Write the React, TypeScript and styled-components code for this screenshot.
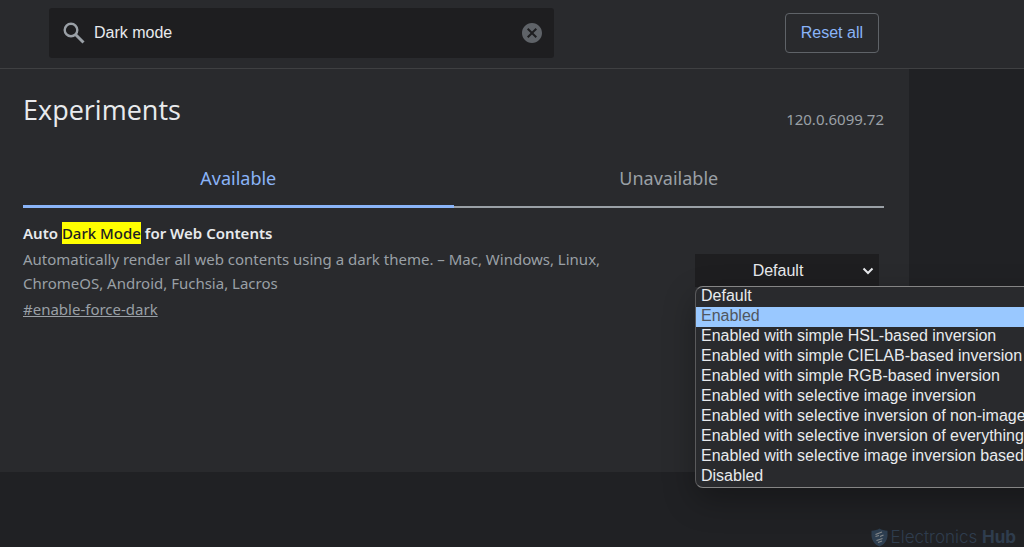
import React, { useState } from "react";
import styled, { createGlobalStyle } from "styled-components";
import { MdCancel } from "react-icons/md";

const GlobalStyle = createGlobalStyle`
  *, *::before, *::after { box-sizing: border-box; }
  html { background: #202124; }
  body {
    margin: 0;
    color: #e8eaed;
    font-family: "Noto Sans", "Open Sans", sans-serif;
    font-size: 15px;
  }
  button, input, select { font-family: "Liberation Sans", Arial, sans-serif; font-size: 16px; }
`;

const Page = styled.div`
  position: relative;
  min-height: 100vh;
  overflow: hidden;
`;

const Header = styled.header`
  background: #292a2d;
  border-bottom: 1px solid #3f4042;
`;

const HeaderContent = styled.div`
  display: flex;
  align-items: center;
  justify-content: space-between;
  gap: 24px;
  max-width: 909px;
  padding: 8px 30px 10px 49px;
`;

const SearchBox = styled.label`
  display: flex;
  align-items: center;
  flex: 0 1 505px;
  height: 50px;
  padding: 0 10px 0 14px;
  border-radius: 3px;
  background: #1e1e20;
`;

const SearchIcon = styled.svg`
  flex: none;
  width: 22px;
  height: 22px;
`;

const SearchInput = styled.input`
  flex: 1;
  min-width: 0;
  margin-left: 9px;
  padding: 0;
  border: 0;
  outline: 0;
  background: transparent;
  color: #e8eaed;
`;

const ClearButton = styled.button`
  display: flex;
  padding: 0;
  border: 0;
  background: transparent;
  color: #5f6368;
  font-size: 24px;
  cursor: pointer;
`;

const ResetButton = styled.button`
  flex: none;
  height: 40px;
  padding: 0 15px;
  border: 1px solid #5f6368;
  border-radius: 4px;
  background: transparent;
  color: #8ab4f8;
  cursor: pointer;
`;

const Panel = styled.main`
  max-width: 909px;
  padding: 21px 25px 151px 23px;
  background: #292a2d;
`;

const TitleRow = styled.div`
  display: flex;
  align-items: flex-end;
  justify-content: space-between;
`;

const Title = styled.h1`
  margin: 0;
  font-family: "Open Sans", "Noto Sans", sans-serif;
  font-size: 27px;
  font-weight: 400;
  line-height: 40px;
`;

const Version = styled.span`
  color: #9aa0a6;
  line-height: 22px;
`;

const TabList = styled.div`
  display: flex;
  margin-top: 19px;
`;

const Tab = styled.button<{ $selected: boolean }>`
  flex: 1;
  height: 59px;
  padding: ${(p) => (p.$selected ? "1px 0 0" : "0")};
  border: 0;
  border-bottom: ${(p) => (p.$selected ? "3px solid #8ab4f8" : "2px solid #9aa0a6")};
  background: transparent;
  color: ${(p) => (p.$selected ? "#8ab4f8" : "#9aa0a6")};
  font-family: "Noto Sans", "Open Sans", sans-serif;
  font-size: 18px;
  cursor: pointer;
`;

const Experiment = styled.section`
  display: flex;
  align-items: flex-start;
  justify-content: space-between;
  padding: 13px 5px 0 0;
`;

const Details = styled.div`
  flex: 0 1 600px;
`;

const Name = styled.h2`
  margin: 0;
  font-size: 15px;
  font-weight: 600;
  line-height: 24px;
`;

const Match = styled.mark`
  padding: 1px 0;
  background: #ffff00;
  color: #202124;
  font-weight: 500;
`;

const Description = styled.p`
  margin: 2px 0;
  color: #9aa0a6;
  line-height: 24px;
`;

const Permalink = styled.a`
  color: #9aa0a6;
  line-height: 24px;
`;

const SelectArea = styled.div`
  position: relative;
  flex: 0 0 184px;
  margin-top: 33px;
`;

const StateSelect = styled.select`
  display: block;
  width: 100%;
  height: 33px;
  padding: 0 18px 0 0;
  border: 0;
  border-radius: 0;
  outline: 0;
  appearance: none;
  background: #1e1e20;
  color: #e8eaed;
  text-align: center;
  text-align-last: center;
`;

const Chevron = styled.svg`
  position: absolute;
  top: 13px;
  right: 5px;
  width: 12px;
  height: 8px;
  pointer-events: none;
`;

const Menu = styled.ul`
  position: absolute;
  z-index: 1;
  top: calc(100% - 1px);
  left: 0;
  margin: 0;
  padding: 0;
  overflow: hidden;
  border: 1px solid #858585;
  border-left-color: #5a5a5c;
  border-radius: 8px;
  background: #292a2d;
  box-shadow: 0 12px 32px rgba(0, 0, 0, 0.3);
  list-style: none;
  font-family: "Liberation Sans", Arial, sans-serif;
  font-size: 16px;
  line-height: 18px;
  white-space: nowrap;
`;

const MenuItem = styled.li<{ $active: boolean }>`
  padding: 0 5px 2px;
  background: ${(p) => (p.$active ? "#99c8ff" : "transparent")};
  color: ${(p) => (p.$active ? "#50565e" : "#e8eaed")};
`;

const Watermark = styled.div`
  position: absolute;
  right: 8px;
  bottom: 0;
  display: flex;
  align-items: center;
  gap: 3px;
  color: #2f3d4e;
  font-family: Inter, sans-serif;
  font-size: 17px;
  font-weight: 300;
  line-height: 20px;

  b { font-weight: 700; }
`;

const ShieldLogo = () => (
  <svg width="17" height="19" viewBox="0 0 17 19" aria-hidden="true">
    <path d="M8.5 0.5 C6.5 2 3.5 2.5 0.5 2.8 L0.5 8 C1 13.5 4.5 17 8.5 18.5 C12.5 17 16 13.5 16.5 8 L16.5 2.8 C13.5 2.5 10.5 2 8.5 0.5Z" fill="#2d3e50" />
    <path d="M4.5 6.5 L11 4 M4.5 8.5 L8 7.5 M9 8.5 L12.5 7 M5.5 12.5 L11.5 10.5 M7 14.5 L11 13" fill="none" stroke="#84888a" strokeWidth="1.2" />
  </svg>
);

const options = [
  "Default",
  "Enabled",
  "Enabled with simple HSL-based inversion",
  "Enabled with simple CIELAB-based inversion",
  "Enabled with simple RGB-based inversion",
  "Enabled with selective image inversion",
  "Enabled with selective inversion of non-image elements",
  "Enabled with selective inversion of everything",
  "Enabled with selective image inversion based on transparency",
  "Disabled",
];

export default function App() {
  const [query, setQuery] = useState("Dark mode");
  const [tab, setTab] = useState("Available");
  const [value, setValue] = useState("Default");
  const [active, setActive] = useState("Enabled");

  return (
    <Page>
      <GlobalStyle />
      <Header>
        <HeaderContent>
          <SearchBox>
            <SearchIcon viewBox="0 0 22 22" aria-hidden="true">
              <circle cx="8" cy="8" r="6.3" fill="none" stroke="#9aa0a6" strokeWidth="2.4" />
              <path d="M12.5 12.5 L20.5 20.5" fill="none" stroke="#9aa0a6" strokeWidth="3" />
            </SearchIcon>
            <SearchInput
              type="text"
              aria-label="Search flags"
              value={query}
              onChange={(e) => setQuery(e.target.value)}
            />
            <ClearButton type="button" aria-label="Clear search" onClick={() => setQuery("")}>
              <MdCancel />
            </ClearButton>
          </SearchBox>
          <ResetButton type="button">Reset all</ResetButton>
        </HeaderContent>
      </Header>
      <Panel>
        <TitleRow>
          <Title>Experiments</Title>
          <Version>120.0.6099.72</Version>
        </TitleRow>
        <TabList role="tablist">
          {["Available", "Unavailable"].map((name) => (
            <Tab
              key={name}
              type="button"
              role="tab"
              aria-selected={tab === name}
              $selected={tab === name}
              onClick={() => setTab(name)}
            >
              {name}
            </Tab>
          ))}
        </TabList>
        <Experiment>
          <Details>
            <Name id="force-dark">
              Auto <Match>Dark Mode</Match> for Web Contents
            </Name>
            <Description>
              Automatically render all web contents using a dark theme. – Mac, Windows, Linux, ChromeOS,
              Android, Fuchsia, Lacros
            </Description>
            <Permalink href="#enable-force-dark">#enable-force-dark</Permalink>
          </Details>
          <SelectArea>
            <StateSelect aria-labelledby="force-dark" value={value} onChange={(e) => setValue(e.target.value)}>
              {options.map((option) => (
                <option key={option}>{option}</option>
              ))}
            </StateSelect>
            <Chevron viewBox="0 0 12 8" aria-hidden="true">
              <path d="M1.5 1.5 L6 6 L10.5 1.5" fill="none" stroke="#e8eaed" strokeWidth="2" />
            </Chevron>
            <Menu role="listbox" aria-labelledby="force-dark">
              {options.map((option) => (
                <MenuItem
                  key={option}
                  role="option"
                  aria-selected={option === value}
                  $active={option === active}
                  onMouseEnter={() => setActive(option)}
                  onClick={() => setValue(option)}
                >
                  {option}
                </MenuItem>
              ))}
            </Menu>
          </SelectArea>
        </Experiment>
      </Panel>
      <Watermark>
        <ShieldLogo />
        <span>
          Electronics <b>Hub</b>
        </span>
      </Watermark>
    </Page>
  );
}
